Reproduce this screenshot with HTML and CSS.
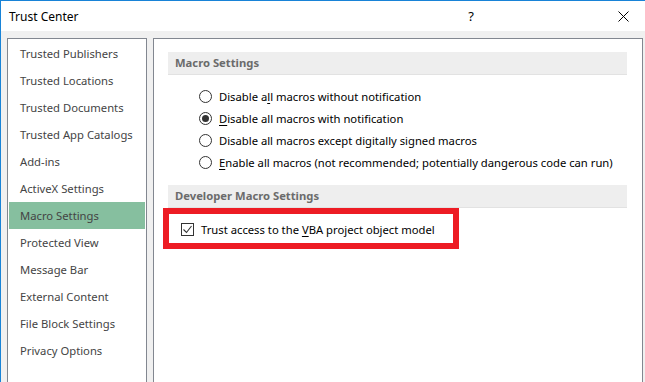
FILE: index.html
```html
<!DOCTYPE html>
<html lang="en">
<head>
    <meta charset="UTF-8">
    <meta name="viewport" content="width=device-width, initial-scale=1.0">
    <title>Trust Center</title>
    <link rel="stylesheet" href="styles.css">
</head>
<body>
    <div class="window">
        <div class="titlebar">
            <span class="title">Trust Center</span>
            <span class="help-btn">?</span>
            <span class="close-btn">
                <svg width="11" height="11" viewBox="0 0 11 11">
                    <path d="M0.5 0.5 L10.5 10.5 M10.5 0.5 L0.5 10.5" stroke="#000" stroke-width="1" fill="none"/>
                </svg>
            </span>
        </div>

        <div class="dialog">
            <ul class="nav-list">
                <li>Trusted Publishers</li>
                <li>Trusted Locations</li>
                <li>Trusted Documents</li>
                <li>Trusted App Catalogs</li>
                <li>Add-ins</li>
                <li>ActiveX Settings</li>
                <li class="active">Macro Settings</li>
                <li>Protected View</li>
                <li>Message Bar</li>
                <li>External Content</li>
                <li>File Block Settings</li>
                <li>Privacy Options</li>
            </ul>

            <div class="pane">
                <div class="group-title">Macro Settings</div>
                <div class="options">
                    <label class="option"><span class="radio"></span><span>Disable a<u>l</u>l macros without notification</span></label>
                    <label class="option"><span class="radio checked"></span><span><u>D</u>isable all macros with notification</span></label>
                    <label class="option"><span class="radio"></span><span>Disable all macros except di<u>g</u>itally signed macros</span></label>
                    <label class="option"><span class="radio"></span><span><u>E</u>nable all macros (not recommended; potentially dangerous code can run)</span></label>
                </div>

                <div class="group-title dev">Developer Macro Settings</div>
                <div class="callout">
                    <label class="option check-row">
                        <span class="checkbox">
                            <svg width="11" height="11" viewBox="0 0 11 11">
                                <path d="M1.5 5.5 L4.5 8.5 L9.5 2" stroke="#333" stroke-width="1.1" fill="none"/>
                            </svg>
                        </span>
                        <span>Trust access to the <u>V</u>BA project object model</span>
                    </label>
                </div>
            </div>
        </div>
    </div>
</body>
</html>
```

FILE: styles.css
```css
body {
    margin: 0;
    padding: 0;
    width: 645px;
    height: 382px;
    overflow: hidden;
    font-family: 'Noto Sans', 'Liberation Sans', sans-serif;
    font-size: 11.25px;
    background-color: #f0f0f0;
    color: #000;
}
.window {
    height: 100%;
    border-top: 1px solid #1883d7;
    border-left: 1px solid #1883d7;
    box-sizing: border-box;
}
.titlebar {
    height: 30px;
    background-color: #fff;
    display: flex;
    align-items: center;
}
.title {
    flex: 1;
    padding-left: 8px;
    font-size: 12px;
}
.help-btn {
    width: 46px;
    text-align: center;
    font-size: 13px;
    margin-right: 107px;
}
.close-btn {
    width: 44px;
    display: flex;
    justify-content: center;
    align-items: center;
}
.dialog {
    display: flex;
    gap: 6px;
    padding: 7px 2px 0 6px;
    height: 360px;
}
.nav-list {
    list-style: none;
    margin: 0;
    padding: 1px;
    width: 136px;
    background-color: #fff;
    border: 1px solid #828790;
}
.nav-list li {
    height: 27px;
    line-height: 27px;
    padding-left: 11px;
    color: #444;
    white-space: nowrap;
}
.nav-list li.active {
    background-color: #86bf9f;
}
.pane {
    flex: 1;
    background-color: #fff;
    border: 1px solid #828790;
    padding: 13px 15px 0 14px;
}
.group-title {
    height: 23px;
    line-height: 22px;
    padding-left: 7px;
    background-color: #eeeeee;
    border-bottom: 1px solid #e2e2e2;
    box-sizing: border-box;
    font-weight: bold;
    color: #6b6b6b;
}
.group-title.dev {
    margin-top: 12px;
}
.options {
    margin-top: 10px;
    padding-left: 31px;
}
.option {
    display: flex;
    align-items: center;
    height: 22px;
    white-space: nowrap;
}
.option u {
    text-underline-offset: 2px;
}
.radio {
    width: 13px;
    height: 13px;
    box-sizing: border-box;
    border: 1px solid #333;
    border-radius: 50%;
    margin-right: 7px;
    display: flex;
    align-items: center;
    justify-content: center;
}
.radio.checked::after {
    content: "";
    width: 7px;
    height: 7px;
    border-radius: 50%;
    background-color: #333;
}
.callout {
    width: 296px;
    box-sizing: border-box;
    margin-left: -5px;
    border: 6px solid #ed1c24;
    padding: 4px 0 3px 12px;
}
.check-row {
    height: 22px;
}
.checkbox {
    width: 13px;
    height: 13px;
    box-sizing: border-box;
    border: 1px solid #333;
    margin-right: 7px;
    display: flex;
    align-items: center;
    justify-content: center;
}
```
